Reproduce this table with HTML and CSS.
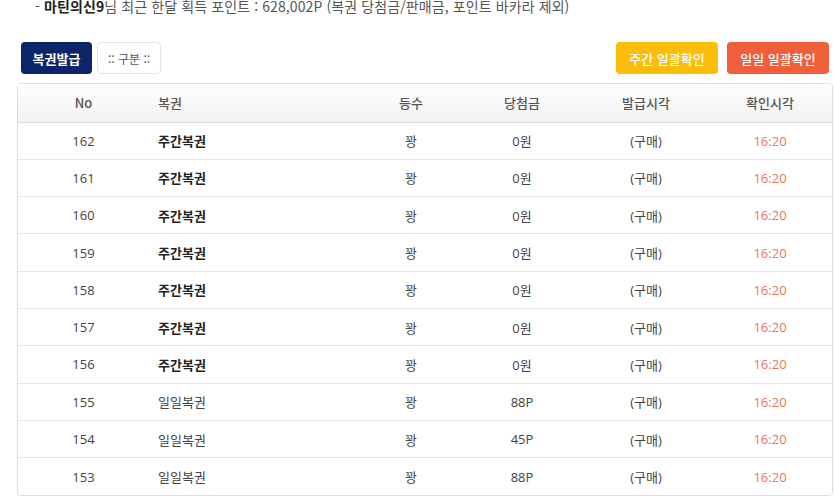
FILE: index.html
```html
<!DOCTYPE html>
<html lang="ko">
<head>
<meta charset="utf-8">
<link rel="stylesheet" href="styles.css">
</head>
<body>
<div class="page">
  <p class="notice">- <b>마틴의신9</b>님 최근 한달 획득 포인트 : 628,002P (복권 당첨금/판매금, 포인트 바카라 제외)</p>
  <div class="toolbar">
    <div class="left">
      <button class="btn navy">복권발급</button>
      <button class="btn plain">:: 구분 ::</button>
    </div>
    <div class="right">
      <button class="btn yellow">주간 일괄확인</button>
      <button class="btn orange">일일 일괄확인</button>
    </div>
  </div>
  <div class="table-wrap">
    <table class="list">
      <colgroup>
        <col class="c1"><col class="c2"><col class="c3"><col class="c4"><col class="c5"><col class="c6">
      </colgroup>
      <thead>
        <tr><th>No</th><th class="name">복권</th><th>등수</th><th>당첨금</th><th>발급시각</th><th>확인시각</th></tr>
      </thead>
      <tbody>
        <tr><td>162</td><td class="name bold">주간복권</td><td>꽝</td><td>0원</td><td>(구매)</td><td class="time">16:20</td></tr>
        <tr><td>161</td><td class="name bold">주간복권</td><td>꽝</td><td>0원</td><td>(구매)</td><td class="time">16:20</td></tr>
        <tr><td>160</td><td class="name bold">주간복권</td><td>꽝</td><td>0원</td><td>(구매)</td><td class="time">16:20</td></tr>
        <tr><td>159</td><td class="name bold">주간복권</td><td>꽝</td><td>0원</td><td>(구매)</td><td class="time">16:20</td></tr>
        <tr><td>158</td><td class="name bold">주간복권</td><td>꽝</td><td>0원</td><td>(구매)</td><td class="time">16:20</td></tr>
        <tr><td>157</td><td class="name bold">주간복권</td><td>꽝</td><td>0원</td><td>(구매)</td><td class="time">16:20</td></tr>
        <tr><td>156</td><td class="name bold">주간복권</td><td>꽝</td><td>0원</td><td>(구매)</td><td class="time">16:20</td></tr>
        <tr><td>155</td><td class="name">일일복권</td><td>꽝</td><td>88P</td><td>(구매)</td><td class="time">16:20</td></tr>
        <tr><td>154</td><td class="name">일일복권</td><td>꽝</td><td>45P</td><td>(구매)</td><td class="time">16:20</td></tr>
        <tr><td>153</td><td class="name">일일복권</td><td>꽝</td><td>88P</td><td>(구매)</td><td class="time">16:20</td></tr>
      </tbody>
    </table>
  </div>
</div>
</body>
</html>
```

FILE: styles.css
```css
* { box-sizing: border-box; }
html, body { margin: 0; padding: 0; background: #fff; }
body {
  font-family: "Open Sans", "Noto Sans CJK KR", sans-serif;
  font-size: 13px;
  color: #333;
}
.page {
  padding: 0 2px 0 17px;
  margin-top: -3px;
}
.notice {
  margin: 0 0 0 18px;
  line-height: 18px;
  font-size: 14px;
  letter-spacing: 0.1px;
  color: #555;
  font-family: "Noto Sans CJK KR", sans-serif;
}
.notice b { color: #222; font-weight: 700; }
.toolbar {
  display: flex;
  justify-content: space-between;
  align-items: center;
  padding: 0 4px;
  margin-top: 27px;
}
.left, .right { display: flex; gap: 5px; }
.right { gap: 9px; }
.btn {
  height: 32px;
  border-radius: 4px;
  border: 1px solid transparent;
  font-family: "Noto Sans CJK KR", sans-serif;
  font-size: 13px;
  font-weight: 700;
  color: #fff;
  padding: 0;
  cursor: pointer;
}
.navy { background: #0c2468; width: 71px; }
.plain { background: #fff; border-color: #e3e3e3; color: #555; font-weight: 400; font-size: 12px; width: 64px; }
.yellow { background: #fbbd0a; width: 102px; font-weight: 500; }
.orange { background: #f05f3b; width: 102px; font-weight: 500; }
.table-wrap {
  margin-top: 9px;
  border: 1px solid #dedede;
  border-radius: 4px;
  overflow: hidden;
  box-shadow: 0 1px 2px rgba(0,0,0,0.06);
}
.list {
  width: 100%;
  border-collapse: collapse;
  table-layout: fixed;
}
.c1 { width: 131px; }
.c2 { width: 213px; }
.c3 { width: 98px; }
.c4 { width: 124px; }
.c5 { width: 124px; }
.c6 { width: auto; }
.list th {
  height: 38px;
  font-family: "Noto Sans CJK KR", sans-serif;
  font-weight: 500;
  color: #555;
  font-size: 13px;
  background: linear-gradient(#ffffff, #f1f1f1);
  border-bottom: 1px solid #dcdcdc;
  text-align: center;
  padding: 0;
}
.list td {
  height: 37.3px;
  text-align: center;
  padding: 0;
  color: #444;
  border-bottom: 1px solid #e6e6e6;
}
.list tbody tr:last-child td { border-bottom: none; }
.list .name { text-align: left; padding-left: 9px; font-family: "Noto Sans CJK KR", sans-serif; }
.list th.name { padding-left: 9px; }
.list td.bold { font-weight: 700; color: #222; }
.list td.time { color: #e8775c; }
```
